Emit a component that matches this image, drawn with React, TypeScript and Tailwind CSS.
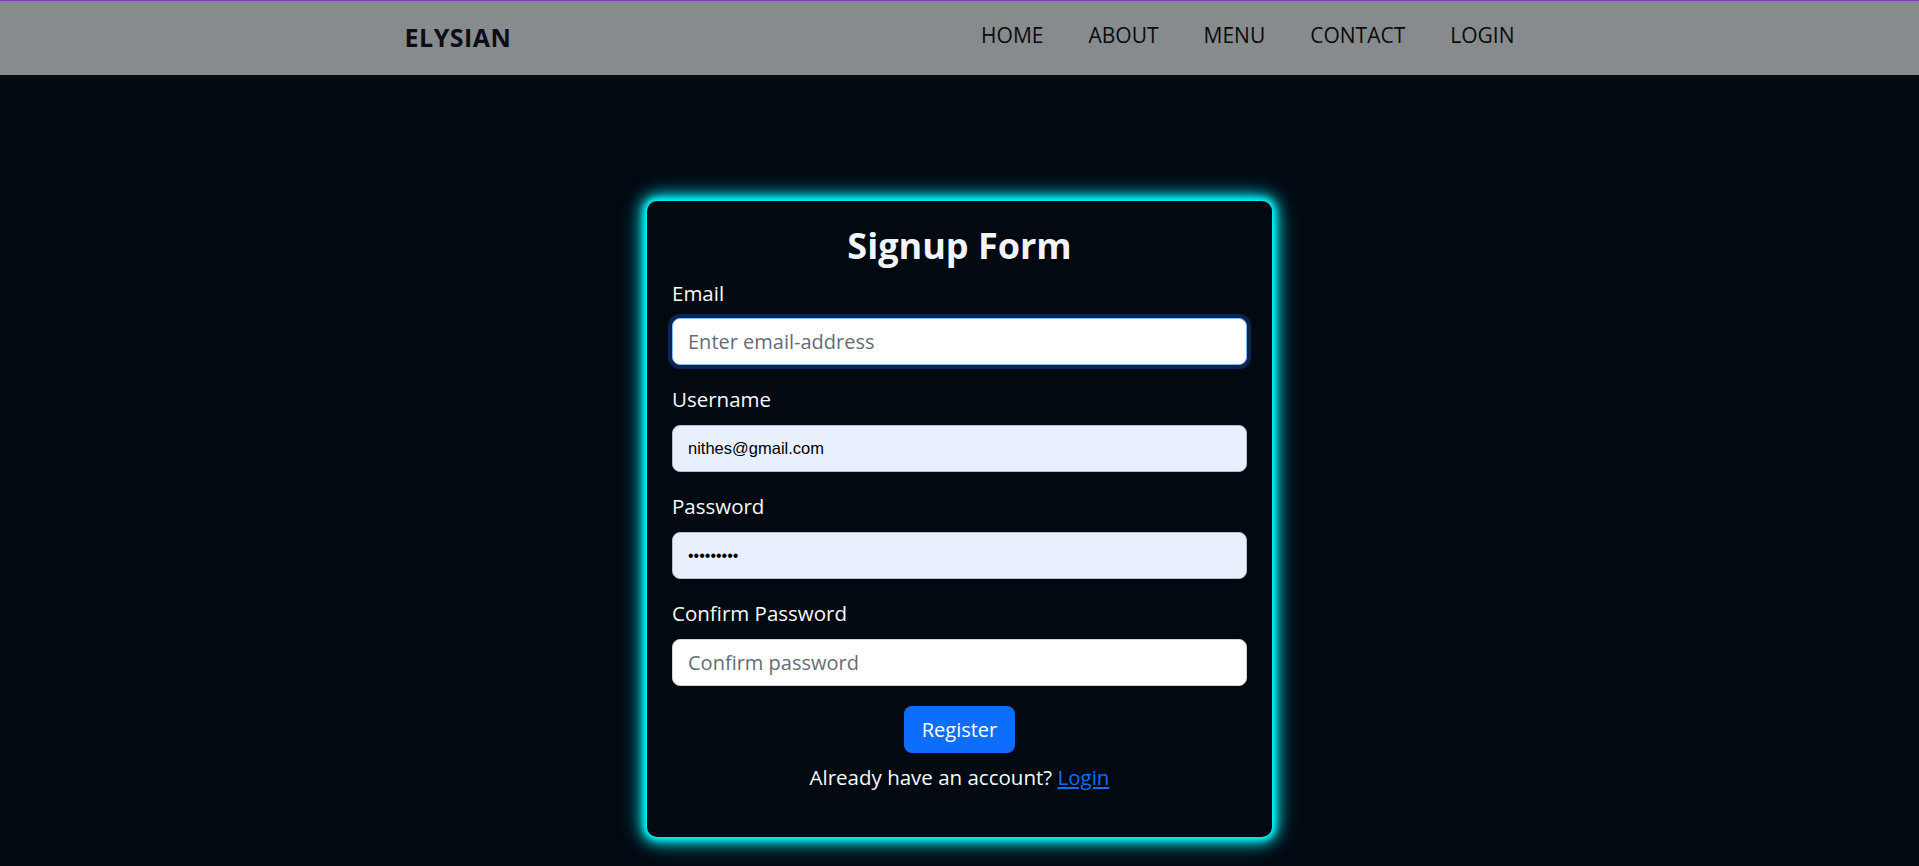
import React from "react";

export default function App() {
  const font = { fontFamily: "'Open Sans', 'Noto Sans', sans-serif" };
  return (
    <div className="min-h-[866px] bg-[#020911]" style={font}>
      <nav className="h-[75px] border-t border-[#7b3fc2] bg-[#888b8e]">
        <div className="mx-auto flex h-full w-[1110px] items-center justify-between">
          <div className="text-[25px] font-bold tracking-[0.5px] text-[#0d0d16]">ELYSIAN</div>
          <ul className="flex items-center gap-[45px] pb-[4px] text-[21px] text-[#0a0a0a]">
            <li>HOME</li>
            <li>ABOUT</li>
            <li>MENU</li>
            <li>CONTACT</li>
            <li>LOGIN</li>
          </ul>
        </div>
      </nav>

      <div className="flex justify-center pt-[126px]">
        <div className="flex h-[636px] w-[625px] flex-col rounded-[10px] bg-[#020911] px-[25px] pt-[23px] shadow-[0_0_6px_2px_#00ffff,0_0_14px_4px_#00eef8,0_0_26px_2px_#00a8b8]">
          <h2 className="text-center text-[36px] font-bold leading-[43px] text-[#f1f5fb]">Signup Form</h2>

          <label className="mt-[11px] block text-[20.5px] leading-[30px] text-[#f8f9fa]">Email</label>
          <input
            type="email"
            autoFocus
            placeholder="Enter email-address"
            className="mt-[10px] h-[47px] w-full rounded-[8px] border border-[#86b7fe] bg-white px-[15px] text-[20px] text-[#212529] shadow-[0_0_0_4px_#0a2650] outline-none placeholder:text-[#646d77]"
          />

          <label className="mt-[19px] block text-[20.5px] leading-[30px] text-[#f8f9fa]">Username</label>
          <input
            type="text"
            defaultValue="nithes@gmail.com"
            className="mt-[11px] h-[47px] w-full rounded-[8px] border border-[#b9bfc8] bg-[#e8f0fe] px-[15px] text-[16.5px] text-black outline-none"
            style={{ fontFamily: "'Liberation Sans', Arial, sans-serif" }}
          />

          <label className="mt-[19px] block text-[20.5px] leading-[30px] text-[#f8f9fa]">Password</label>
          <input
            type="password"
            defaultValue="123456789"
            className="mt-[11px] h-[47px] w-full rounded-[8px] border border-[#b9bfc8] bg-[#e8f0fe] px-[15px] text-[16px] text-black outline-none"
            style={{ fontFamily: "'Liberation Sans', Arial, sans-serif" }}
          />

          <label className="mt-[19px] block text-[20.5px] leading-[30px] text-[#f8f9fa]">Confirm Password</label>
          <input
            type="password"
            placeholder="Confirm password"
            className="mt-[11px] h-[47px] w-full rounded-[8px] border border-[#ced4da] bg-white px-[15px] text-[20px] text-[#212529] outline-none placeholder:text-[#646d77]"
          />

          <div className="mt-[20px] flex justify-center">
            <button className="h-[47px] rounded-[8px] bg-[#0d6efd] px-[18px] text-[20px] text-white">Register</button>
          </div>

          <p className="mt-[9px] text-center text-[20.5px] leading-[30px] text-[#f8f9fa]">
            Already have an account? <a href="#" className="text-[#0d6efd] underline">Login</a>
          </p>
        </div>
      </div>
    </div>
  );
}
